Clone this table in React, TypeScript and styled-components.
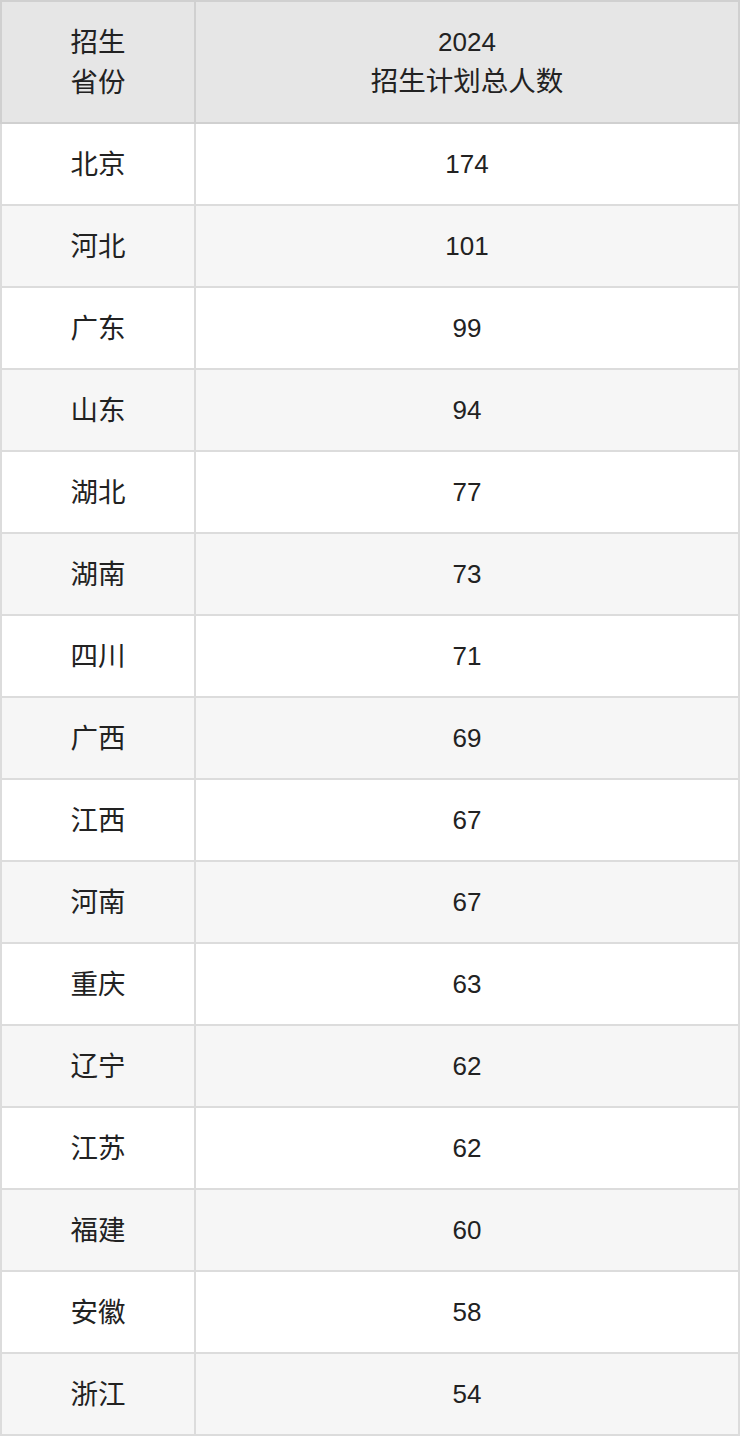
import React from "react";
import styled, { createGlobalStyle } from "styled-components";

const GlobalStyle = createGlobalStyle`
  html, body { margin: 0; padding: 0; background: #ffffff; }
  body { font-family: "Liberation Sans", Arial, "Noto Sans CJK SC", sans-serif; }
`;

const Table = styled.table`
  width: 740px;
  border-collapse: collapse;
  table-layout: fixed;
  border: 2px solid #d6d6d6;
  color: #222222;
  font-family: "Liberation Sans", Arial, "Noto Sans CJK SC", sans-serif;
  font-size: 26px;
`;

const HeadCell = styled.th<{ $w?: number }>`
  ${(p) => (p.$w ? `width: ${p.$w}px;` : "")}
  height: 120px;
  padding: 0;
  background: #e6e6e6;
  border: 2px solid #d0d0d0;
  font-weight: normal;
  line-height: 37px;
  text-align: center;
  vertical-align: middle;
`;

const Row = styled.tr<{ $alt: boolean }>`
  background: ${(p) => (p.$alt ? "#f6f6f6" : "#ffffff")};
`;

const Cell = styled.td`
  height: 80px;
  padding: 0;
  border: 2px solid #dcdcdc;
  text-align: center;
  vertical-align: middle;
  line-height: 37px;
`;

const Zh = styled.span`
  font-family: "Noto Sans CJK SC", sans-serif;
  font-size: 27.5px;
`;

const data: [string, number][] = [
  ["北京", 174],
  ["河北", 101],
  ["广东", 99],
  ["山东", 94],
  ["湖北", 77],
  ["湖南", 73],
  ["四川", 71],
  ["广西", 69],
  ["江西", 67],
  ["河南", 67],
  ["重庆", 63],
  ["辽宁", 62],
  ["江苏", 62],
  ["福建", 60],
  ["安徽", 58],
  ["浙江", 54],
];

export default function App() {
  return (
    <>
      <GlobalStyle />
      <Table>
        <thead>
          <tr>
            <HeadCell $w={192}>
              <Zh>招生</Zh>
              <br />
              <Zh>省份</Zh>
            </HeadCell>
            <HeadCell>
              2024
              <br />
              <Zh>招生计划总人数</Zh>
            </HeadCell>
          </tr>
        </thead>
        <tbody>
          {data.map(([p, n], i) => (
            <Row key={p} $alt={i % 2 === 1}>
              <Cell>
                <Zh>{p}</Zh>
              </Cell>
              <Cell>{n}</Cell>
            </Row>
          ))}
        </tbody>
      </Table>
    </>
  );
}
